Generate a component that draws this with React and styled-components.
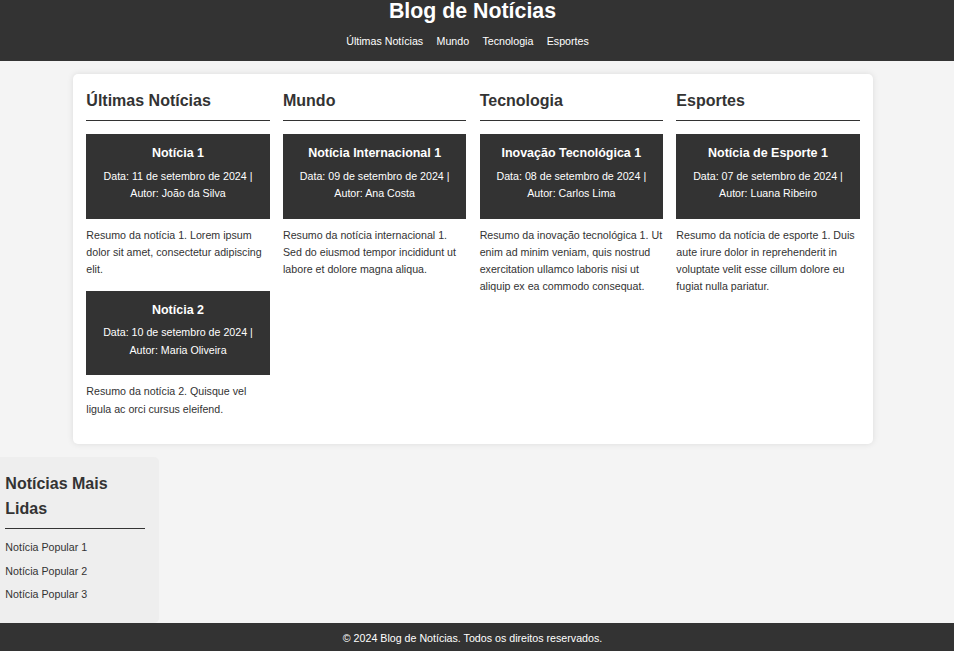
import styled, { createGlobalStyle } from 'styled-components'

const GlobalStyle = createGlobalStyle`
  body {
    margin: 0;
    background: #f4f4f4;
    color: #333;
    font-family: "Liberation Sans", Arial, sans-serif;
    font-size: 10.67px;
    line-height: 1.6;
  }
`

const sections = [
  {
    title: 'Últimas Notícias',
    posts: [
      {
        title: 'Notícia 1',
        date: '11 de setembro de 2024',
        author: 'João da Silva',
        summary: 'Resumo da notícia 1. Lorem ipsum dolor sit amet, consectetur adipiscing elit.'
      },
      {
        title: 'Notícia 2',
        date: '10 de setembro de 2024',
        author: 'Maria Oliveira',
        summary: 'Resumo da notícia 2. Quisque vel ligula ac orci cursus eleifend.'
      }
    ]
  },
  {
    title: 'Mundo',
    posts: [
      {
        title: 'Notícia Internacional 1',
        date: '09 de setembro de 2024',
        author: 'Ana Costa',
        summary: 'Resumo da notícia internacional 1. Sed do eiusmod tempor incididunt ut labore et dolore magna aliqua.'
      }
    ]
  },
  {
    title: 'Tecnologia',
    posts: [
      {
        title: 'Inovação Tecnológica 1',
        date: '08 de setembro de 2024',
        author: 'Carlos Lima',
        summary: 'Resumo da inovação tecnológica 1. Ut enim ad minim veniam, quis nostrud exercitation ullamco laboris nisi ut aliquip ex ea commodo consequat.'
      }
    ]
  },
  {
    title: 'Esportes',
    posts: [
      {
        title: 'Notícia de Esporte 1',
        date: '07 de setembro de 2024',
        author: 'Luana Ribeiro',
        summary: 'Resumo da notícia de esporte 1. Duis aute irure dolor in reprehenderit in voluptate velit esse cillum dolore eu fugiat nulla pariatur.'
      }
    ]
  }
]

const navItems = ['Últimas Notícias', 'Mundo', 'Tecnologia', 'Esportes']
const popular = ['Notícia Popular 1', 'Notícia Popular 2', 'Notícia Popular 3']

const App = () => (
  <>
    <GlobalStyle />
    <Header>
      <SiteTitle>Blog de Notícias</SiteTitle>
      <Nav>
        {navItems.map(item => (
          <li key={item}><NavLink href='#'>{item}</NavLink></li>
        ))}
      </Nav>
    </Header>

    <Main>
      {sections.map(section => (
        <section key={section.title}>
          <SectionTitle>{section.title}</SectionTitle>
          {section.posts.map(post => (
            <Article key={post.title}>
              <Card>
                <CardTitle>{post.title}</CardTitle>
                <Meta>Data: {post.date} | Autor: {post.author}</Meta>
              </Card>
              <Summary>{post.summary}</Summary>
            </Article>
          ))}
        </section>
      ))}
    </Main>

    <Sidebar>
      <SectionTitle $gap='10px'>Notícias Mais Lidas</SectionTitle>
      <PopularList>
        {popular.map(item => (
          <li key={item}><PopularLink href='#'>{item}</PopularLink></li>
        ))}
      </PopularList>
    </Sidebar>

    <Footer>© 2024 Blog de Notícias. Todos os direitos reservados.</Footer>
  </>
)

const Header = styled.header`
  background: #333;
  color: #fff;
  text-align: center;
  padding: 0 9px 11px 0;
`

const SiteTitle = styled.h1`
  margin: 0;
  font-size: 21.33px;
  line-height: 22px;
`

const Nav = styled.ul`
  list-style: none;
  margin: 11px 0 0;
  padding: 0 10px 0 0;
  display: flex;
  justify-content: center;
  gap: 13.33px;
  line-height: 17px;
`

const NavLink = styled.a`
  color: #fff;
  text-decoration: none;
`

const Main = styled.main`
  box-sizing: border-box;
  width: 800px;
  margin: 13.33px 0 0 73px;
  padding: 13.33px;
  background: #fff;
  border-radius: 5px;
  box-shadow: 0 0 6.67px rgba(0, 0, 0, 0.1);
  display: grid;
  grid-template-columns: repeat(4, 1fr);
  gap: 13.33px;
  align-items: start;
`

const SectionTitle = styled.h2`
  margin: 0 0 ${({ $gap }) => $gap || '13.33px'};
  padding-bottom: 6.67px;
  border-bottom: 1px solid #333;
  font-size: 16px;
  line-height: 1.6;
`

const Article = styled.article`
  margin-bottom: 13.33px;
`

const Card = styled.div`
  background: #333;
  color: #fff;
  text-align: center;
  padding: 10px 10px 15.6px;
`

const CardTitle = styled.h3`
  margin: 0 0 3.4px;
  font-size: 12.48px;
  line-height: 1.6;
`

const Meta = styled.p`
  margin: 0;
  line-height: 17.7px;
`

const Summary = styled.p`
  margin: 8px 0 0;
`

const Sidebar = styled.aside`
  box-sizing: border-box;
  width: 158.67px;
  margin-top: 13px;
  padding: 13.33px 13.33px 13.33px 5.33px;
  background: #eee;
  border-radius: 0 5px 5px 0;
`

const PopularList = styled.ul`
  list-style: none;
  margin: 0;
  padding: 0;

  li {
    margin-bottom: 6.33px;
  }
`

const PopularLink = styled.a`
  color: #333;
  text-decoration: none;
`

const Footer = styled.footer`
  background: #333;
  color: #fff;
  text-align: center;
  padding: 6.67px 9px 6.67px 0;
`

export default App
